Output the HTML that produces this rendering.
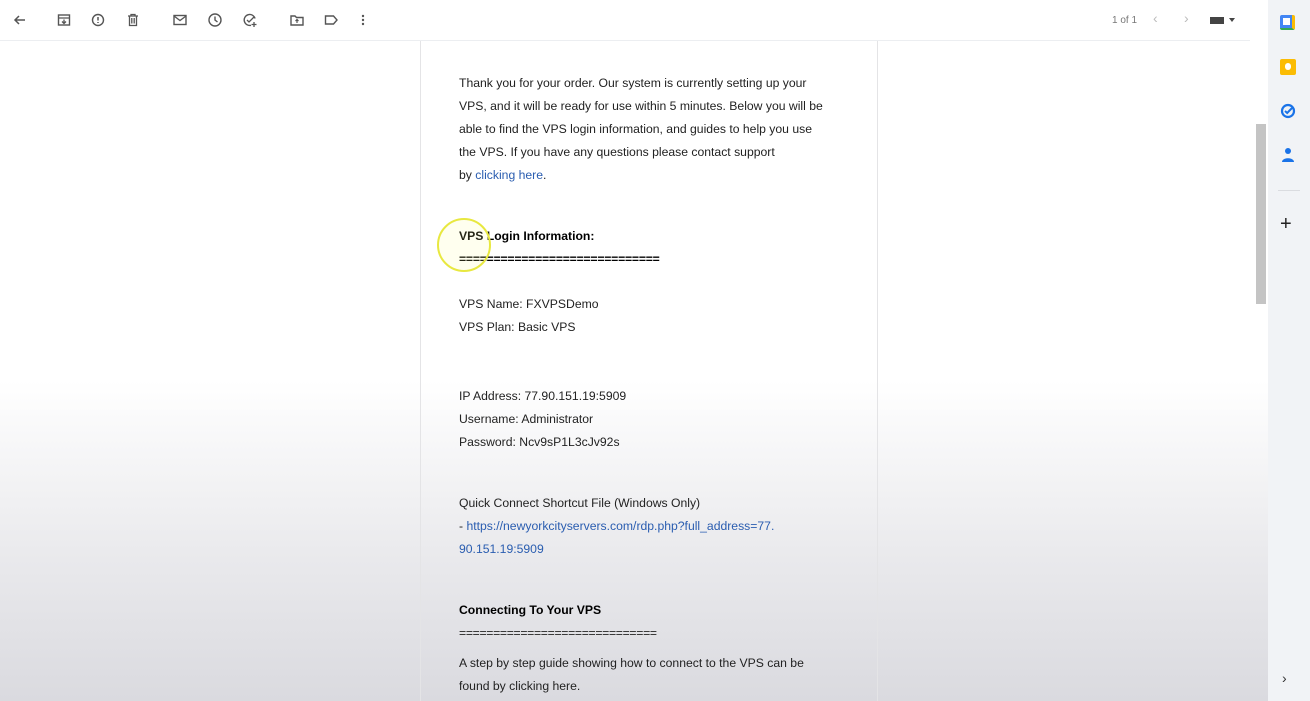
<!DOCTYPE html>
<html><head><meta charset="utf-8"><style>
body{margin:0;width:1310px;height:701px;overflow:hidden;font-family:"Liberation Sans",Arial,sans-serif;position:relative;background:#fff}
.main{position:absolute;left:0;top:0;width:1268px;height:701px;background:linear-gradient(#fff 0,#fff 380px,#e9e9ec 560px,#dadadf 701px)}
.side{position:absolute;left:1268px;top:0;width:42px;height:701px;background:#f1f3f6}
.tb{position:absolute;top:0;left:0;width:1250px;height:40px;border-bottom:1px solid #eceef1;background:#fff}
.ic{position:absolute;top:12px;width:16px;height:16px}
.col{position:absolute;left:420px;top:41px;width:456px;height:660px;border-left:1px solid #e4e4e6;border-right:1px solid #e4e4e6}
.t{position:absolute;left:459px;font-size:12.2px;color:#222;line-height:23px;white-space:nowrap}
a{color:#2a5db0;text-decoration:none}
b{font-weight:bold;color:#000}
.sb{position:absolute;left:1256px;top:124px;width:10px;height:180px;background:#c4c4c4}
</style></head><body>
<div class="main"></div>
<div class="col"></div>
<div class="tb">
<svg class="ic" style="left:12px" viewBox="0 0 16 16"><path d="M13 8H3M7 4L3 8l4 4" stroke="#555" stroke-width="1.5" fill="none"/></svg>
<svg class="ic" style="left:56px" viewBox="0 0 16 16"><rect x="2.5" y="3" width="11" height="10" stroke="#555" stroke-width="1.4" fill="none"/><path d="M2.5 6h11M8 7.5v3.5M6 9.5l2 2 2-2" stroke="#555" stroke-width="1.3" fill="none"/></svg>
<svg class="ic" style="left:90px" viewBox="0 0 16 16"><circle cx="8" cy="8" r="5.5" stroke="#555" stroke-width="1.4" fill="none"/><path d="M8 5v3.5M8 10v1" stroke="#555" stroke-width="1.5"/></svg>
<svg class="ic" style="left:125px" viewBox="0 0 16 16"><path d="M3 4h10M6 4V2.5h4V4M4.5 4v9.5h7V4M6.8 6v5.5M9.2 6v5.5" stroke="#555" stroke-width="1.3" fill="none"/></svg>
<svg class="ic" style="left:172px" viewBox="0 0 16 16"><rect x="2" y="3.5" width="12" height="9" stroke="#555" stroke-width="1.4" fill="none"/><path d="M2 4l6 4.5L14 4" stroke="#555" stroke-width="1.3" fill="none"/></svg>
<svg class="ic" style="left:207px" viewBox="0 0 16 16"><circle cx="8" cy="8" r="6" stroke="#555" stroke-width="1.4" fill="none"/><path d="M8 4.5V8l2.5 2" stroke="#555" stroke-width="1.4" fill="none"/></svg>
<svg class="ic" style="left:242px" viewBox="0 0 16 16"><path d="M13 6.5A5.5 5.5 0 1 0 9 13.3" stroke="#555" stroke-width="1.4" fill="none"/><path d="M5 8l2 2 5-5M12 10v5M9.5 12.5h5" stroke="#555" stroke-width="1.3" fill="none"/></svg>
<svg class="ic" style="left:289px" viewBox="0 0 16 16"><path d="M2 4h4l1.5 1.5H14V13H2z" stroke="#555" stroke-width="1.4" fill="none"/><path d="M8 11V7.5M6.5 9L8 7.5 9.5 9" stroke="#555" stroke-width="1.2" fill="none"/></svg>
<svg class="ic" style="left:323px" viewBox="0 0 16 16"><path d="M2.5 4h8l3.5 4-3.5 4h-8z" stroke="#555" stroke-width="1.4" fill="none"/></svg>
<svg class="ic" style="left:355px" viewBox="0 0 16 16"><circle cx="8" cy="4" r="1.2" fill="#555"/><circle cx="8" cy="8" r="1.2" fill="#555"/><circle cx="8" cy="12" r="1.2" fill="#555"/></svg>
<div style="position:absolute;left:1112px;top:15px;font-size:10px;color:#777">1 of 1</div>
<div style="position:absolute;left:1153px;top:10px;font-size:14px;color:#bbb">‹</div>
<div style="position:absolute;left:1184px;top:10px;font-size:14px;color:#bbb">›</div>
<div style="position:absolute;left:1210px;top:17px;width:14px;height:7px;background:#444"></div>
<div style="position:absolute;left:1229px;top:18px;border:3px solid transparent;border-top:4px solid #444"></div>
</div>
<div class="side">
<div style="position:absolute;left:12px;top:15px;width:15px;height:15px;border-radius:2px;background:#4285f4;border-right:3px solid #fbbc04;border-bottom:2px solid #34a853;box-sizing:border-box"><div style="margin:3px;width:7px;height:7px;background:#fff"></div></div>
<div style="position:absolute;left:12px;top:59px;width:16px;height:16px;border-radius:2px;background:#fbbc04"><div style="margin:4px 5px;width:6px;height:7px;border-radius:3px;background:#fff"></div></div>
<svg style="position:absolute;left:12px;top:103px" width="16" height="16" viewBox="0 0 16 16"><circle cx="8" cy="8" r="6" stroke="#1a73e8" stroke-width="2.2" fill="none"/><path d="M5 8l2.2 2L12 5" stroke="#1a73e8" stroke-width="2" fill="none"/></svg>
<svg style="position:absolute;left:13px;top:147px" width="14" height="16" viewBox="0 0 14 16"><circle cx="7" cy="4" r="3" fill="#1a73e8"/><path d="M1 15c0-5 12-5 12 0z" fill="#1a73e8"/></svg>
<div style="position:absolute;left:10px;top:190px;width:22px;height:1px;background:#dadce0"></div>
<div style="position:absolute;left:12px;top:213px;font-size:20px;color:#222">+</div>
<div style="position:absolute;left:14px;top:670px;font-size:14px;color:#333">›</div>
</div>
<div class="sb"></div>
<div class="t" style="top:72px">Thank you for your order. Our system is currently setting up your<br>VPS, and it will be ready for use within 5 minutes. Below you will be<br>able to find the VPS login information, and guides to help you use<br>the VPS. If you have any questions please contact support<br>by <a>clicking here</a>.</div>
<div class="t" style="top:225px"><b>VPS Login Information:</b><br><b style="letter-spacing:-0.2px">=============================</b></div>
<div style="position:absolute;left:437px;top:218px;width:54px;height:54px;border-radius:50%;border:2px solid #e8e840;box-sizing:border-box;background:rgba(255,255,150,.15)"></div>
<div class="t" style="top:293px">VPS Name: FXVPSDemo<br>VPS Plan: Basic VPS</div>
<div class="t" style="top:385px">IP Address: 77.90.151.19:5909<br>Username: Administrator<br>Password: Ncv9sP1L3cJv92s</div>
<div class="t" style="top:492px">Quick Connect Shortcut File (Windows Only)<br>- <a>https://newyorkcityservers.com/rdp.php?full_address=77.</a><br><a>90.151.19:5909</a></div>
<div class="t" style="top:599px"><b>Connecting To Your VPS</b><br><span style="letter-spacing:-0.3px">=============================</span></div>
<div class="t" style="top:652px">A step by step guide showing how to connect to the VPS can be<br>found by clicking here.</div>
</body></html>
